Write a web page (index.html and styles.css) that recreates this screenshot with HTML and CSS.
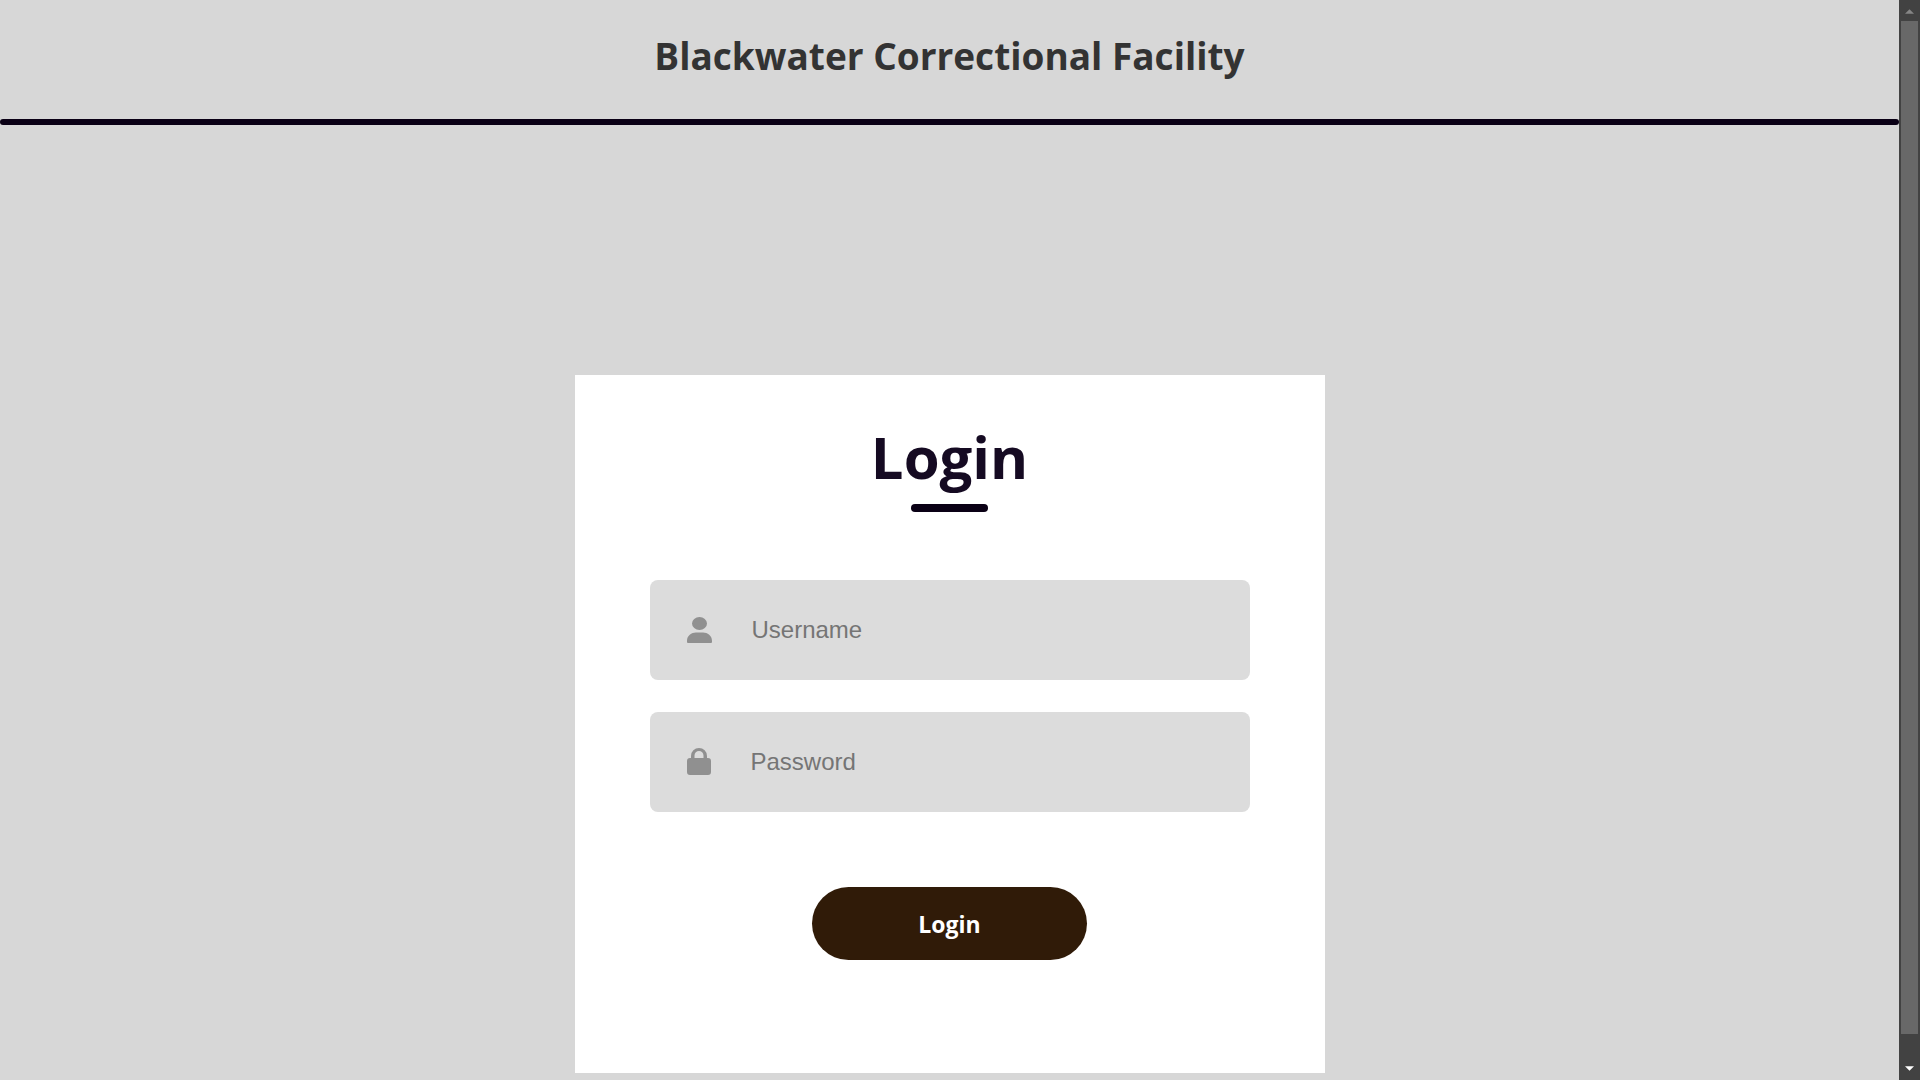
FILE: index.html
```html
<!DOCTYPE html>
<html lang="en">
<head>
  <meta charset="utf-8">
  <meta name="viewport" content="width=device-width, initial-scale=1">
  <title>Blackwater Correctional Facility</title>
  <link rel="stylesheet" href="styles.css">
</head>
<body>
  <div class="page">
    <header class="site-header">
      <h1 class="site-title">Blackwater Correctional Facility</h1>
    </header>
    <main class="content">
      <form class="card">
        <h2 class="card-title">Login</h2>
        <div class="fields">
          <label class="field">
            <svg class="icon icon-user" viewBox="0 0 25 26" aria-hidden="true">
              <ellipse cx="12.5" cy="6.5" rx="7.5" ry="6.5"/>
              <path d="M0 26v-2C0 18.500 4.500 15.500 9 15.500h7c4.500 0 9 3 9 8.500v1q0 1-1 1H1q-1 0-1-1z"/>
            </svg>
            <input class="input" type="text" name="username" placeholder="Username" aria-label="Username">
          </label>
          <label class="field">
            <svg class="icon icon-lock" viewBox="0 0 24 28" aria-hidden="true">
              <path d="M4 10V8a8 8 0 0 1 16 0v2h1a3 3 0 0 1 3 3v11a3 3 0 0 1-3 3H3a3 3 0 0 1-3-3V13a3 3 0 0 1 3-3zm3.500 0h9V7.500a4.500 4.500 0 0 0-9 0z"/>
            </svg>
            <input class="input" type="password" name="password" placeholder="Password" aria-label="Password">
          </label>
        </div>
        <button class="submit" type="submit">Login</button>
      </form>
    </main>
  </div>
  <div class="scrollbar" aria-hidden="true">
    <svg class="arrow arrow-up" viewBox="0 0 10 5"><path d="M5 0l5 5H0z"/></svg>
    <div class="thumb"></div>
    <svg class="arrow arrow-down" viewBox="0 0 10 5"><path d="M0 0h10L5 5z"/></svg>
  </div>
</body>
</html>
```
FILE: styles.css
```css
* {
  box-sizing: border-box;
  margin: 0;
  padding: 0;
}

body {
  display: grid;
  grid-template-columns: minmax(0, 1fr) 21px;
  height: 100vh;
  overflow: hidden;
  background: #d7d7d7;
  font-family: "Segoe UI", "Open Sans", "Noto Sans", sans-serif;
}

.page {
  overflow: hidden;
}

.site-header {
  position: relative;
  padding: 28px 0 41px;
  text-align: center;
}

.site-header::after {
  content: "";
  position: absolute;
  left: 0;
  bottom: 0;
  width: 100%;
  height: 6px;
  border-radius: 4px;
  background: #0a0015;
}

.site-title {
  color: #333;
  font-size: 37px;
  line-height: 56px;
}

.content {
  display: flex;
  justify-content: center;
  padding-top: 250px;
}

.card {
  display: flex;
  flex-direction: column;
  align-items: center;
  width: 750px;
  max-width: 100%;
  padding: 40px 75px 113px;
  background: #fff;
}

.card-title {
  display: flex;
  flex-direction: column;
  align-items: center;
  gap: 5px;
  color: #150a22;
  font-size: 58px;
  line-height: 84px;
}

.card-title::after {
  content: "";
  width: 77px;
  height: 8px;
  border-radius: 4px;
  background: #0a0015;
}

.fields {
  display: grid;
  gap: 32px;
  width: 100%;
  margin-top: 68px;
}

.field {
  display: flex;
  align-items: center;
  gap: 40px;
  height: 100px;
  padding: 0 37px;
  border-radius: 8px;
  background: #dcdcdc;
}

.icon {
  flex: none;
  fill: #909090;
}

.icon-user {
  width: 25px;
  height: 26px;
}

.icon-lock {
  width: 24px;
  height: 28px;
}

.input {
  flex: 1;
  min-width: 0;
  height: 60px;
  border: 0;
  outline: 0;
  background: transparent;
  color: #333;
  font: 24px Arial, "Liberation Sans", sans-serif;
}

.input::placeholder {
  color: #757575;
}

.submit {
  width: 275px;
  height: 73px;
  margin-top: 75px;
  border: 0;
  border-radius: 37px;
  background: #301b08;
  color: #fff;
  font: inherit;
  font-size: 23px;
  font-weight: 700;
  cursor: pointer;
}

.scrollbar {
  display: flex;
  flex-direction: column;
  align-items: center;
  padding: 9px 0;
  background: #424242;
}

.arrow {
  flex: none;
  width: 9px;
  height: 5px;
}

.arrow-up {
  fill: #868686;
}

.arrow-down {
  fill: #fff;
}

.thumb {
  flex: 1;
  width: 17px;
  margin: 7px 0 32px;
  background: #686868;
}
```
